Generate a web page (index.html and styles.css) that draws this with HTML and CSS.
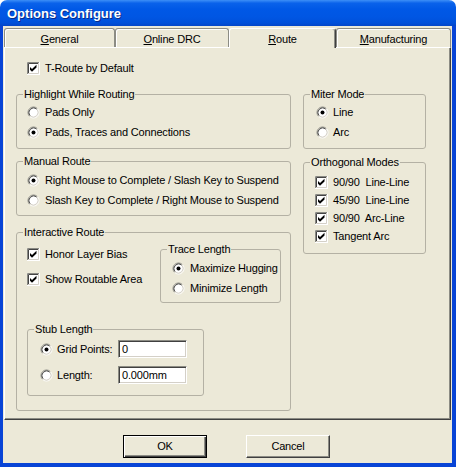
FILE: index.html
```html
<!DOCTYPE html>
<html>
<head>
<meta charset="utf-8">
<title>Options Configure</title>
<link rel="stylesheet" href="styles.css">
</head>
<body>
<svg class="defs" width="0" height="0" aria-hidden="true">
  <symbol id="rb" viewBox="0 0 13 13">
    <circle cx="6.5" cy="6.5" r="4.5" fill="#fff"/>
    <path d="M2.61 10.39 A5.5 5.5 0 0 1 10.39 2.61" fill="none" stroke="#8a8a84"/>
    <path d="M10.39 2.61 A5.5 5.5 0 0 1 2.61 10.39" fill="none" stroke="#fff"/>
    <path d="M3.32 9.68 A4.5 4.5 0 0 1 9.68 3.32" fill="none" stroke="#444"/>
    <path d="M9.68 3.32 A4.5 4.5 0 0 1 3.32 9.68" fill="none" stroke="#d4d0c8"/>
  </symbol>
  <symbol id="rbon" viewBox="0 0 13 13">
    <use href="#rb"/>
    <circle cx="6.5" cy="6.5" r="2" fill="#000"/>
  </symbol>
  <symbol id="cbon" viewBox="0 0 13 13">
    <rect x="0" y="0" width="13" height="13" fill="#fff"/>
    <path d="M0.5 12 V0.5 H12" fill="none" stroke="#8a8a84"/>
    <path d="M1.5 11 V1.5 H11" fill="none" stroke="#444"/>
    <path d="M0 12.5 H12.5 V0" fill="none" stroke="#fff"/>
    <path d="M1 11.5 H11.5 V1" fill="none" stroke="#d4d0c8"/>
    <path d="M3 5 L5 7 L9.5 2.8 L9.5 5.5 L5 9.8 L3 7.8 Z" fill="#000"/>
  </symbol>
</svg>

<div class="window">
  <div class="titlebar"><span class="title">Options Configure</span></div>
  <div class="frame">
    <div class="tabs">
      <div class="tab tab-general"><u>G</u>eneral</div>
      <div class="tab tab-drc"><u>O</u>nline DRC</div>
      <div class="tab tab-route active"><u>R</u>oute</div>
      <div class="tab tab-mfg"><u>M</u>anufacturing</div>
    </div>

    <div class="panel">
      <div class="col-left">
        <div class="row troute"><svg class="ctl"><use href="#cbon"/></svg><span>T-Route by Default</span></div>

        <fieldset class="group g-highlight">
          <legend>Highlight While Routing</legend>
          <div class="gbody">
            <div class="row"><svg class="ctl"><use href="#rb"/></svg><span>Pads Only</span></div>
            <div class="row"><svg class="ctl"><use href="#rbon"/></svg><span>Pads, Traces and Connections</span></div>
          </div>
        </fieldset>

        <fieldset class="group g-manual">
          <legend>Manual Route</legend>
          <div class="gbody">
            <div class="row"><svg class="ctl"><use href="#rbon"/></svg><span>Right Mouse to Complete / Slash Key to Suspend</span></div>
            <div class="row"><svg class="ctl"><use href="#rb"/></svg><span>Slash Key to Complete / Right Mouse to Suspend</span></div>
          </div>
        </fieldset>

        <fieldset class="group g-interactive">
          <legend>Interactive Route</legend>
          <div class="ir-top">
            <div class="ir-checks">
              <div class="row"><svg class="ctl"><use href="#cbon"/></svg><span>Honor Layer Bias</span></div>
              <div class="row"><svg class="ctl"><use href="#cbon"/></svg><span>Show Routable Area</span></div>
            </div>
            <fieldset class="group g-trace">
              <legend>Trace Length</legend>
              <div class="gbody">
                <div class="row"><svg class="ctl"><use href="#rbon"/></svg><span>Maximize Hugging</span></div>
                <div class="row"><svg class="ctl"><use href="#rb"/></svg><span>Minimize Length</span></div>
              </div>
            </fieldset>
          </div>
          <fieldset class="group g-stub">
            <legend>Stub Length</legend>
            <div class="gbody">
              <div class="row"><svg class="ctl narrow"><use href="#rbon"/></svg><span class="flabel">Grid Points:</span><div class="field">0</div></div>
              <div class="row"><svg class="ctl narrow"><use href="#rb"/></svg><span class="flabel">Length:</span><div class="field">0.000mm</div></div>
            </div>
          </fieldset>
        </fieldset>
      </div>

      <div class="col-right">
        <fieldset class="group g-miter">
          <legend>Miter Mode</legend>
          <div class="gbody">
            <div class="row"><svg class="ctl narrow"><use href="#rbon"/></svg><span>Line</span></div>
            <div class="row"><svg class="ctl narrow"><use href="#rb"/></svg><span>Arc</span></div>
          </div>
        </fieldset>
        <fieldset class="group g-ortho">
          <legend>Orthogonal Modes</legend>
          <div class="gbody">
            <div class="row"><svg class="ctl"><use href="#cbon"/></svg><span class="pre">90/90  Line-Line</span></div>
            <div class="row"><svg class="ctl"><use href="#cbon"/></svg><span class="pre">45/90  Line-Line</span></div>
            <div class="row"><svg class="ctl"><use href="#cbon"/></svg><span class="pre">90/90  Arc-Line</span></div>
            <div class="row"><svg class="ctl"><use href="#cbon"/></svg><span>Tangent Arc</span></div>
          </div>
        </fieldset>
      </div>
    </div>

    <div class="buttons">
      <div class="btn default">OK</div>
      <div class="btn">Cancel</div>
    </div>
  </div>
</div>
</body>
</html>
```

FILE: styles.css
```css
html, body {
  margin: 0;
  padding: 0;
  background: #ffffff;
}
body {
  font-family: "Liberation Sans", Arial, sans-serif;
  font-size: 11px;
  letter-spacing: -0.17px;
  color: #000;
}
.defs {
  position: absolute;
  width: 0;
  height: 0;
  overflow: hidden;
}
.window {
  width: 456px;
  height: 467px;
  overflow: hidden;
}
.titlebar {
  height: 26px;
  box-sizing: border-box;
  border-radius: 7px 7px 0 0;
  background: linear-gradient(to bottom, #3d8ff7 0%, #0a62ea 12%, #0058e6 35%, #0056e3 65%, #0050da 88%, #0446c8 100%);
  display: flex;
  align-items: center;
  padding-left: 7px;
}
.title {
  color: #fff;
  font-family: "Liberation Sans", Arial, sans-serif;
  font-weight: bold;
  font-size: 13px;
  letter-spacing: 0;
  text-shadow: 1px 1px 0 #0b2a86;
  padding-top: 1px;
}
.frame {
  height: 441px;
  box-sizing: border-box;
  background: #ece9d8;
  border-left: 3px solid #0844d6;
  border-right: 4px solid #0844d6;
  border-bottom: 4px solid #0844d6;
  padding: 0 1px;
}
.tabs {
  height: 21px;
  display: flex;
  align-items: flex-end;
}
.tab {
  height: 19px;
  box-sizing: border-box;
  border: 1px solid #8c8c84;
  border-bottom: none;
  border-radius: 3px 3px 0 0;
  box-shadow: inset 1px 1px 0 #fff;
  background: #ece9d8;
  text-align: center;
  line-height: 18px;
  padding-top: 1px;
}
.tab u { text-decoration: underline; }
.tab-general { width: 111px; }
.tab-drc { width: 114px; }
.tab-route { width: 107px; }
.tab-mfg { width: 115px; }
.tab.active {
  height: 20px;
  margin-bottom: -1px;
  position: relative;
  z-index: 1;
  border-color: #fff #404040 transparent #fff;
  box-shadow: inset -1px 0 0 #8c8c84;
}
.panel {
  height: 373px;
  box-sizing: border-box;
  border: 1px solid;
  border-color: #fff #404040 #404040 #fff;
  box-shadow: inset -1px -1px 0 #8c8c84;
  display: flex;
  padding-left: 11px;
  gap: 12px;
}
.col-left {
  width: 275px;
  padding-top: 10px;
  display: flex;
  flex-direction: column;
}
.col-right {
  width: 123px;
  padding-top: 40px;
  display: flex;
  flex-direction: column;
}
.row {
  height: 20px;
  display: flex;
  align-items: center;
  white-space: nowrap;
}
.ctl {
  width: 13px;
  height: 13px;
  flex: none;
  margin-right: 5px;
}
.ctl.narrow { margin-right: 4px; }
.pre { white-space: pre; }
.troute { padding-left: 11px; }

.group {
  margin: 0;
  padding: 0;
  min-width: 0;
  border: 1px solid #b4b1a4;
  border-radius: 3px;
  box-sizing: border-box;
}
.group legend {
  margin-left: 6px;
  padding: 0 1px;
  line-height: 13px;
  font-size: 11px;
}
.troute + .group { margin-top: 10px; }
.g-highlight .gbody { padding: 1px 0 6px 10px; }
.g-manual { margin-top: 6px; }
.g-manual .gbody { padding: 2px 0 5px 10px; }
.g-interactive { margin-top: 10px; padding-bottom: 14px; }
.ir-top {
  display: flex;
  padding-left: 10px;
}
.ir-checks {
  width: 133px;
  padding-top: 5px;
  display: flex;
  flex-direction: column;
  gap: 5px;
}
.g-trace {
  width: 121px;
  margin-top: 4px;
}
.g-trace .gbody { padding: 2px 0 4px 11px; }
.g-stub {
  width: 177px;
  margin: 20px 0 0 10px;
}
.g-stub .gbody {
  padding: 3px 0 10px 12px;
  display: flex;
  flex-direction: column;
  gap: 6px;
}
.flabel { width: 61px; }
.field {
  width: 69px;
  height: 18px;
  box-sizing: border-box;
  background: #fff;
  border: 1px solid;
  border-color: #8c8c84 #fff #fff #8c8c84;
  box-shadow: inset 1px 1px 0 #404040, inset -1px -1px 0 #d4d0c8;
  padding-left: 3px;
  line-height: 16px;
}
.g-miter .gbody { padding: 1px 0 6px 12px; }
.g-ortho { margin-top: 7px; }
.g-ortho .gbody { padding: 4px 0 8px 11px; }
.g-ortho .row { height: 18px; }

.buttons {
  display: flex;
  padding-left: 119px;
  gap: 39px;
  margin-top: 15px;
}
.btn {
  width: 84px;
  height: 23px;
  box-sizing: border-box;
  border: 1px solid;
  border-color: #fff #404040 #404040 #fff;
  box-shadow: inset -1px -1px 0 #8c8c84;
  text-align: center;
  line-height: 20px;
}
.btn.default {
  border-color: #000;
  box-shadow: inset 1px 1px 0 #fff, inset -1px -1px 0 #404040, inset -2px -2px 0 #8c8c84;
}
```
